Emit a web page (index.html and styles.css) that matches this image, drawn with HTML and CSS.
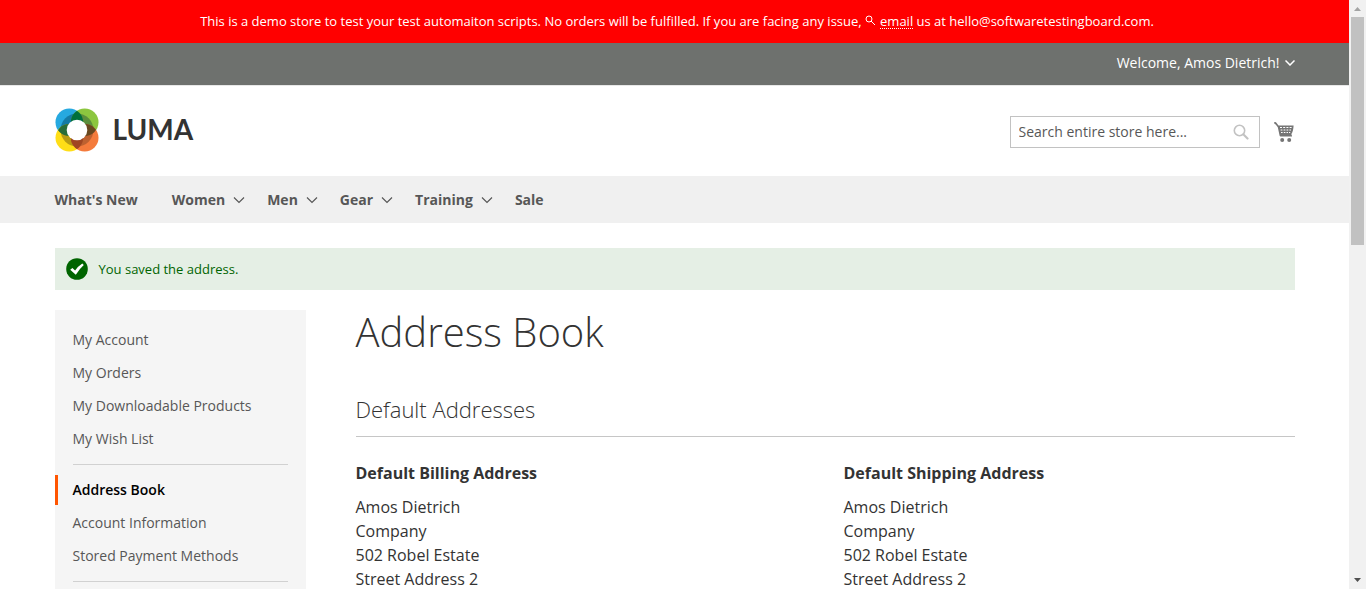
FILE: index.html
```html
<!DOCTYPE html>
<html lang="en">
<head>
<meta charset="utf-8">
<title>Address Book</title>
<link rel="stylesheet" href="styles.css">
</head>
<body>
<div class="page">
  <div class="notice">
    <p>This is a demo store to test your test automaiton scripts. No orders will be fulfilled. If you are facing any issue, <a href="#"><svg class="notice-icon" viewBox="0 0 11 11" aria-hidden="true"><circle cx="4" cy="4" r="3"/><path d="M6 6l4 4"/></svg><span class="notice-word">email</span></a> us at hello@softwaretestingboard.com.</p>
  </div>
  <div class="panel">
    <div class="container panel-inner">
      <button class="welcome" type="button">Welcome, Amos Dietrich!<svg class="chevron-small" viewBox="0 0 10 6" aria-hidden="true"><path d="M.5 .5l4.500 4.500 4.500-4.500"/></svg></button>
    </div>
  </div>
  <header class="container header">
    <a class="logo" href="#">
      <svg class="logo-mark" viewBox="0 0 44 44" aria-hidden="true">
        <defs>
          <clipPath id="c-blue"><circle cx="14.300" cy="14.300" r="13.800"/></clipPath>
          <clipPath id="c-green"><circle cx="29.700" cy="14.300" r="13.800"/></clipPath>
          <clipPath id="c-yellow"><circle cx="14.300" cy="29.700" r="13.800"/></clipPath>
          <clipPath id="c-orange"><circle cx="29.700" cy="29.700" r="13.800"/></clipPath>
        </defs>
        <circle cx="14.300" cy="14.300" r="13.800" fill="#26a9e0"/>
        <circle cx="29.700" cy="14.300" r="13.800" fill="#8cc63f"/>
        <circle cx="14.300" cy="29.700" r="13.800" fill="#ffde17"/>
        <circle cx="29.700" cy="29.700" r="13.800" fill="#f47b3c"/>
        <g clip-path="url(#c-blue)"><circle cx="22" cy="22" r="16.500" fill="#147ba5"/></g>
        <g clip-path="url(#c-green)"><circle cx="22" cy="22" r="16.500" fill="#5c8f3c"/></g>
        <g clip-path="url(#c-yellow)"><circle cx="22" cy="22" r="16.500" fill="#b79c15"/></g>
        <g clip-path="url(#c-orange)"><circle cx="22" cy="22" r="16.500" fill="#bd6130"/></g>
        <g clip-path="url(#c-blue)"><circle cx="29.700" cy="14.300" r="13.800" fill="#00703c"/><circle cx="14.300" cy="29.700" r="13.800" fill="#286d39"/></g>
        <g clip-path="url(#c-orange)"><circle cx="29.700" cy="14.300" r="13.800" fill="#69481f"/><circle cx="14.300" cy="29.700" r="13.800" fill="#a04622"/></g>
        <circle cx="22" cy="22" r="10.300" fill="#fff"/>
      </svg>
      <span class="logo-name">LUMA</span>
    </a>
    <div class="tools">
      <form class="search">
        <input class="search-input" type="text" aria-label="Search" placeholder="Search entire store here...">
        <button class="search-button" type="button" aria-label="Search"><svg viewBox="0 0 16 16" aria-hidden="true"><circle cx="6.5" cy="6.5" r="5.2"/><path d="M10.5 10.5l4 4" stroke-width="2.2" stroke-linecap="round"/></svg></button>
      </form>
      <a class="cart" href="#" aria-label="My Cart"><svg viewBox="0 0 20 20" aria-hidden="true">
        <path d="M0 .5q1-1 2.200-.1l2.300 3.100H19.600q-.3 5.800-2 8l-.2 1.800H18v1.200H6.400q-.9-.2-.9-1.200L3.800 5.200 1.700 2.400Q0 2.300 0 .5z"/>
        <path d="M6 5.500h2M9.200 5.500h2M12.400 5.500h2M15.600 5.500h2M6.600 8h1.800M9.600 8h1.800M12.500 8h1.800M15.400 8H17M7 10.500h1.600M9.800 10.500h1.600M12.500 10.500H14M15 10.500h1.200" stroke="#fff" stroke-width="1.100"/>
        <circle cx="8.200" cy="18" r="2"/><circle cx="15.200" cy="18" r="2"/>
      </svg></a>
    </div>
  </header>
  <nav class="nav">
    <ul class="container nav-list">
      <li class="nav-first"><a href="#">What's New</a></li>
      <li><a href="#">Women<svg class="chevron" viewBox="0 0 12 8" aria-hidden="true"><path d="M1 1.5l5 5 5-5"/></svg></a></li>
      <li><a href="#">Men<svg class="chevron" viewBox="0 0 12 8" aria-hidden="true"><path d="M1 1.5l5 5 5-5"/></svg></a></li>
      <li><a href="#">Gear<svg class="chevron" viewBox="0 0 12 8" aria-hidden="true"><path d="M1 1.5l5 5 5-5"/></svg></a></li>
      <li><a href="#">Training<svg class="chevron" viewBox="0 0 12 8" aria-hidden="true"><path d="M1 1.5l5 5 5-5"/></svg></a></li>
      <li><a href="#">Sale</a></li>
    </ul>
  </nav>
  <div class="container">
    <div class="message" role="status">
      <svg class="message-icon" viewBox="0 0 22 22" aria-hidden="true"><circle cx="11" cy="11" r="10.8" fill="#006400"/><path d="M4.200 11.800L6.400 10l2.700 2.500q2.800-4.200 7.200-7l1.500 1.500q-4.500 4-8 9.800z" fill="#fff"/></svg>
      <span>You saved the address.</span>
    </div>
    <div class="columns">
      <aside class="sidebar">
        <ul class="side-group">
          <li><a href="#">My Account</a></li>
          <li><a href="#">My Orders</a></li>
          <li><a href="#">My Downloadable Products</a></li>
          <li><a href="#">My Wish List</a></li>
        </ul>
        <ul class="side-group">
          <li class="current"><a href="#" aria-current="page">Address Book</a></li>
          <li><a href="#">Account Information</a></li>
          <li><a href="#">Stored Payment Methods</a></li>
        </ul>
        <div class="side-group"></div>
      </aside>
      <main class="main">
        <h1>Address Book</h1>
        <h2>Default Addresses</h2>
        <div class="addresses">
          <section>
            <h3>Default Billing Address</h3>
            <address>Amos Dietrich<br>Company<br>502 Robel Estate<br>Street Address 2</address>
          </section>
          <section>
            <h3>Default Shipping Address</h3>
            <address>Amos Dietrich<br>Company<br>502 Robel Estate<br>Street Address 2</address>
          </section>
        </div>
      </main>
    </div>
  </div>
</div>
<div class="scrollbar" aria-hidden="true">
  <svg class="scroll-arrow" viewBox="0 0 17 17"><path d="M5 11l3.500-4 3.500 4z" fill="#a3a3a3"/></svg>
  <div class="scroll-track"><div class="scroll-thumb"></div></div>
  <svg class="scroll-arrow" viewBox="0 0 17 17"><path d="M5 6l3.500 4 3.500-4z" fill="#505050"/></svg>
</div>
</body>
</html>
```
FILE: styles.css
```css
* {
  box-sizing: border-box;
}

body {
  margin: 0;
  display: flex;
  height: 100vh;
  overflow: hidden;
  background: #fff;
  color: #333;
  font-family: "Open Sans", "Noto Sans", sans-serif;
  font-size: 14px;
  line-height: 20px;
}

a {
  color: inherit;
  text-decoration: none;
}

ul, p, h1, h2, h3 {
  margin: 0;
  padding: 0;
}

ul {
  list-style: none;
}

button {
  padding: 0;
  border: 0;
  background: none;
  color: inherit;
  font: inherit;
  cursor: pointer;
}

svg {
  display: block;
}

.page {
  flex: 1;
  min-width: 0;
  overflow: hidden;
}

.container {
  width: 100%;
  max-width: 1280px;
  margin: 0 auto;
  padding: 0 20px;
}

.notice {
  padding: 12px 0 12px 5px;
  background: #f00;
  color: #fff;
  font-size: 13px;
  line-height: 19px;
  text-align: center;
}

.notice-icon {
  display: inline-block;
  width: 11px;
  height: 11px;
  margin-right: 4px;
  fill: none;
  stroke: #fff;
}

.notice-word {
  display: inline-block;
  border-bottom: 1px dotted #fff;
  line-height: 13px;
}

.panel {
  background: #6e716e;
  color: #fff;
  border-bottom: 1px solid #e8e8e8;
}

.panel-inner {
  display: flex;
  justify-content: flex-end;
  padding-top: 10px;
  padding-bottom: 12px;
}

.welcome {
  display: flex;
  align-items: center;
  gap: 5px;
}

.chevron-small {
  width: 10px;
  height: 6px;
  fill: none;
  stroke: #fff;
  stroke-width: 1.5;
}

.header {
  display: flex;
  justify-content: space-between;
  align-items: center;
  padding-top: 22px;
  padding-bottom: 24px;
}

.logo {
  display: flex;
  align-items: center;
  gap: 14px;
}

.logo-mark {
  width: 44px;
  height: 44px;
}

.logo-name {
  padding-bottom: 2px;
  font-family: Lato, sans-serif;
  font-size: 28px;
  font-weight: 700;
  line-height: 32px;
}

.tools {
  display: flex;
  align-items: center;
  gap: 14px;
  padding-top: 4px;
}

.search {
  display: flex;
  width: 250px;
  height: 32px;
  border: 1px solid #c2c2c2;
}

.search-input {
  flex: 1;
  min-width: 0;
  padding: 0 8px;
  border: 0;
  outline: 0;
  background: none;
  color: #333;
  font: inherit;
}

.search-input::placeholder {
  color: #575757;
  opacity: 1;
}

.search-button {
  width: 36px;
  display: grid;
  place-items: center;
}

.search-button svg {
  width: 16px;
  height: 16px;
  fill: none;
  stroke: #c2c2c2;
  stroke-width: 1.6;
}

.cart svg {
  width: 20px;
  height: 20px;
  margin-right: 1px;
  fill: #757575;
}

.nav {
  background: #f0f0f0;
}

.nav-list {
  display: flex;
  gap: 28px;
  color: #575757;
  font-weight: 700;
  line-height: 47px;
}

.nav-first {
  margin-right: 6px;
}

.nav-list a {
  display: flex;
  align-items: center;
}

.chevron {
  width: 12px;
  height: 8px;
  margin-left: 8px;
  margin-right: -6px;
  fill: none;
  stroke: #575757;
  stroke-width: 1.2;
}

.message {
  display: flex;
  align-items: center;
  gap: 11px;
  margin: 25px 0 20px;
  padding: 11px;
  background: #e5efe5;
  color: #006400;
  font-size: 13px;
}

.message-icon {
  width: 22px;
  height: 22px;
  margin: -1px 0;
}

.columns {
  display: flex;
  align-items: flex-start;
  gap: 50px;
}

.sidebar {
  flex: 0 0 251px;
  padding: 15px 0;
  background: #f5f5f5;
  color: #575757;
}

.side-group li {
  margin-bottom: 3px;
  padding: 5px 15px;
  border-left: 3px solid transparent;
}

.side-group + .side-group::before {
  content: "";
  display: block;
  margin: 10px 18px;
  border-top: 1px solid #d1d1d1;
}

.side-group .current {
  border-color: #ff5501;
  color: #000;
  font-weight: 600;
}

.main {
  flex: 1;
  min-width: 0;
}

h1 {
  font-size: 40px;
  font-weight: 300;
  line-height: 44px;
}

h2 {
  margin: 39px 0 24px;
  padding-bottom: 11px;
  border-bottom: 1px solid #c6c6c6;
  font-size: 22px;
  font-weight: 300;
  line-height: 32px;
}

.addresses {
  display: grid;
  grid-template-columns: 1fr 1fr;
  gap: 37px;
  font-size: 16px;
  line-height: 24px;
}

h3 {
  margin-bottom: 10px;
  font-size: 16px;
  font-weight: 700;
}

address {
  font-style: normal;
}

.scrollbar {
  display: flex;
  flex-direction: column;
  flex: 0 0 17px;
  background: #f1f1f1;
}

.scroll-arrow {
  width: 17px;
  height: 17px;
}

.scroll-track {
  flex: 1;
  padding: 0 2px;
}

.scroll-thumb {
  height: 41%;
  background: #c1c1c1;
}
```
